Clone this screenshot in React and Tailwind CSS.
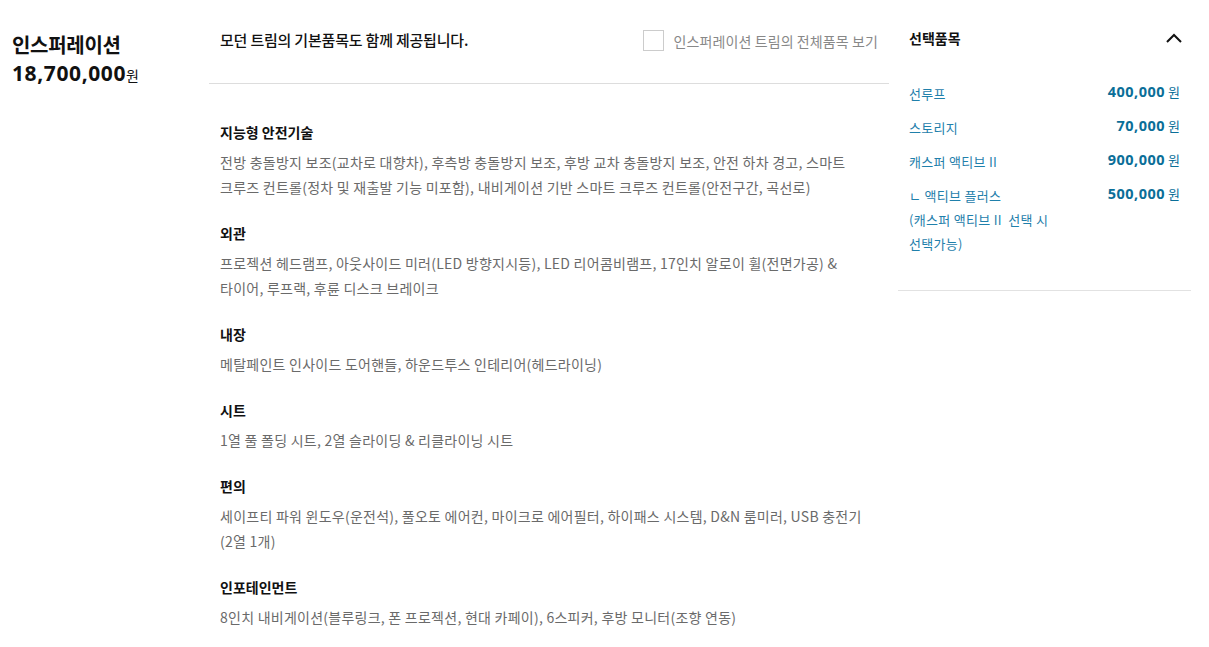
import React from 'react'

const sections = [
  {
    title: '지능형 안전기술',
    desc: '전방 충돌방지 보조(교차로 대향차), 후측방 충돌방지 보조, 후방 교차 충돌방지 보조, 안전 하차 경고, 스마트 크루즈 컨트롤(정차 및 재출발 기능 미포함), 내비게이션 기반 스마트 크루즈 컨트롤(안전구간, 곡선로)',
  },
  {
    title: '외관',
    desc: '프로젝션 헤드램프, 아웃사이드 미러(LED 방향지시등), LED 리어콤비램프, 17인치 알로이 휠(전면가공) & 타이어, 루프랙, 후륜 디스크 브레이크',
  },
  { title: '내장', desc: '메탈페인트 인사이드 도어핸들, 하운드투스 인테리어(헤드라이닝)' },
  { title: '시트', desc: '1열 풀 폴딩 시트, 2열 슬라이딩 & 리클라이닝 시트' },
  {
    title: '편의',
    desc: '세이프티 파워 윈도우(운전석), 풀오토 에어컨, 마이크로 에어필터, 하이패스 시스템, D&N 룸미러, USB 충전기 (2열 1개)',
  },
  { title: '인포테인먼트', desc: '8인치 내비게이션(블루링크, 폰 프로젝션, 현대 카페이), 6스피커, 후방 모니터(조향 연동)' },
]

const options = [
  { name: ['선루프'], price: '400,000' },
  { name: ['스토리지'], price: '70,000' },
  { name: ['캐스퍼 액티브 II'], price: '900,000' },
  { name: ['ㄴ 액티브 플러스', '(캐스퍼 액티브 II  선택 시', '선택가능)'], price: '500,000' },
]

const App = () => {
  return (
    <div
      className="flex w-[1209px] min-h-[647px] bg-white text-[#111]"
      style={{ fontFamily: '"Noto Sans CJK KR", "Noto Sans", sans-serif' }}
    >
      {/* trim name and price */}
      <div className="w-[209px] shrink-0 pl-[12px] pt-[31px]">
        <h2 className="text-[20px] font-bold leading-[28px] tracking-[-0.3px]">인스퍼레이션</h2>
        <p className="text-[21px] font-bold leading-[28px] tracking-[0.6px]" style={{ fontFamily: '"Noto Sans", sans-serif' }}>
          18,700,000<span className="text-[14px] font-normal tracking-normal" style={{ fontFamily: '"Noto Sans CJK KR", sans-serif' }}>원</span>
        </p>
      </div>

      {/* basic items */}
      <div className="w-[680px] shrink-0">
        <div className="flex h-[84px] items-start justify-between border-b border-[#dddddd] px-[11px] pt-[29px]">
          <p className="text-[15px] font-medium leading-[22px] tracking-[-0.2px]">모던 트림의 기본품목도 함께 제공됩니다.</p>
          <label className="flex items-center gap-[10px] pt-[1px]">
            <span className="block h-[21px] w-[21px] border border-[#cccccc] bg-white" />
            <span className="text-[14px] leading-[20px] tracking-[0.1px] text-[#888888]">인스퍼레이션 트림의 전체품목 보기</span>
          </label>
        </div>
        <div className="pl-[11px] pr-[22px] pt-[38px]">
          {sections.map((s) => (
            <div key={s.title} className="mb-[23px]">
              <h3 className="text-[14px] font-bold leading-[20px]">{s.title}</h3>
              <p className="mt-[8px] break-keep text-[14px] leading-[25px] tracking-[0.25px] text-[#6a6a6a]">{s.desc}</p>
            </div>
          ))}
        </div>
      </div>

      {/* selected options */}
      <div className="ml-[9px] w-[293px] shrink-0">
        <div className="border-b border-[#e2e2e2] px-[11px] pb-[34px] pt-[28px]">
          <div className="flex items-center justify-between">
            <h3 className="text-[14px] font-bold leading-[20px]">선택품목</h3>
            <svg width="18" height="12" viewBox="0 0 18 12" fill="none" stroke="#111" strokeWidth="2" className="mr-[-3px]">
              <path d="M2 10 L9 3 L16 10" />
            </svg>
          </div>
          <ul className="mt-[34px] flex flex-col gap-[10px]">
            {options.map((o) => (
              <li key={o.price} className="flex items-start justify-between">
                <span className="text-[13px] leading-[24px] tracking-[0.3px] text-[#1f80ab]">
                  {o.name.map((line) => (
                    <span key={line} className="block whitespace-pre">{line}</span>
                  ))}
                </span>
                <span className="text-[13px] leading-[18px] text-[#0a6e98]">
                  <span className="text-[14.5px] font-bold tracking-[0.5px]" style={{ fontFamily: '"Noto Sans", sans-serif' }}>{o.price}</span> 원
                </span>
              </li>
            ))}
          </ul>
        </div>
      </div>
    </div>
  )
}

export default App
